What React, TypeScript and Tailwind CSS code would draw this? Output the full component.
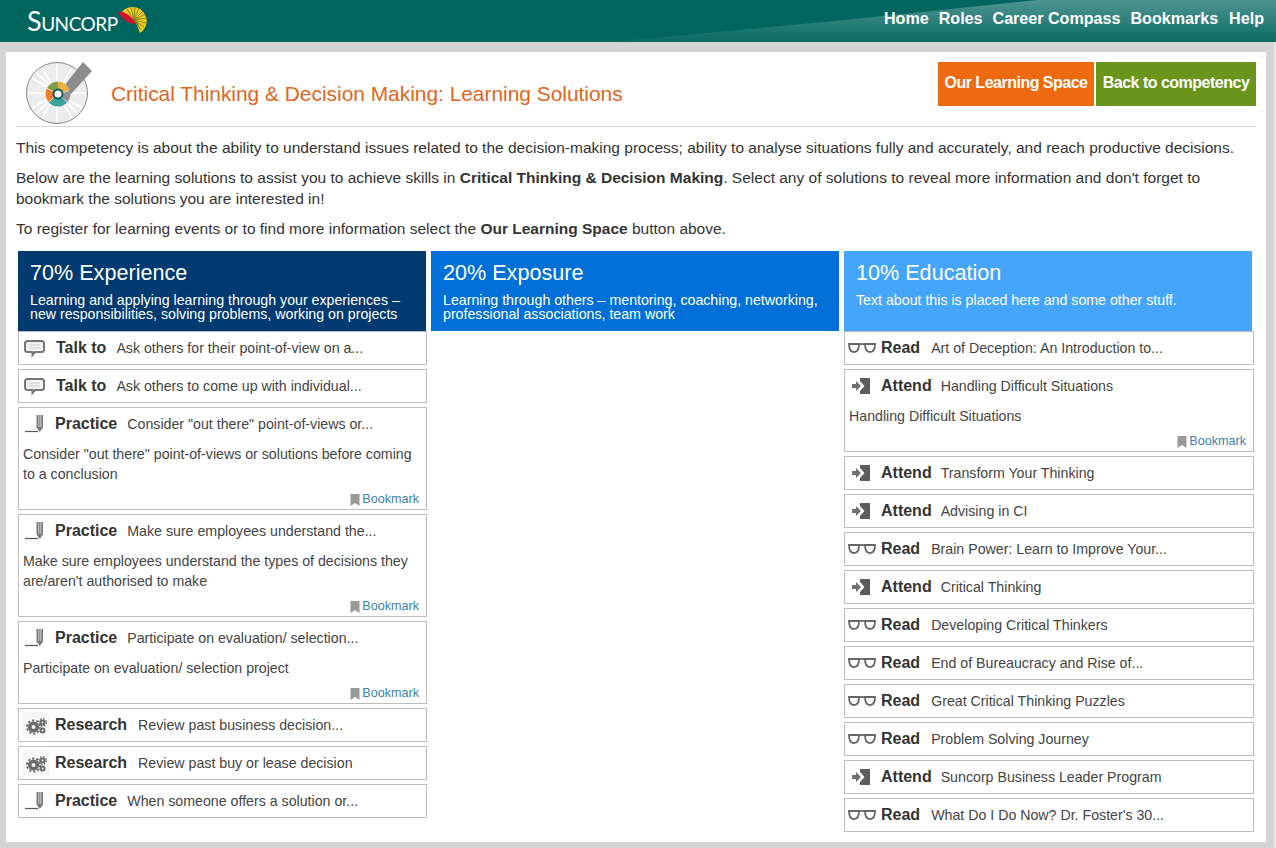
type Kind = "talk" | "practice" | "research" | "read" | "attend"

type Item = {
  kind: Kind
  text: string
  detail?: string[]
}

const labels: Record<Kind, string> = {
  talk: "Talk to",
  practice: "Practice",
  research: "Research",
  read: "Read",
  attend: "Attend",
}

const experience: Item[] = [
  { kind: "talk", text: "Ask others for their point-of-view on a..." },
  { kind: "talk", text: "Ask others to come up with individual..." },
  {
    kind: "practice",
    text: 'Consider "out there" point-of-views or...',
    detail: ['Consider "out there" point-of-views or solutions before coming', "to a conclusion"],
  },
  {
    kind: "practice",
    text: "Make sure employees understand the...",
    detail: ["Make sure employees understand the types of decisions they", "are/aren't authorised to make"],
  },
  {
    kind: "practice",
    text: "Participate on evaluation/ selection...",
    detail: ["Participate on evaluation/ selection project"],
  },
  { kind: "research", text: "Review past business decision..." },
  { kind: "research", text: "Review past buy or lease decision" },
  { kind: "practice", text: "When someone offers a solution or..." },
]

const education: Item[] = [
  { kind: "read", text: "Art of Deception: An Introduction to..." },
  { kind: "attend", text: "Handling Difficult Situations", detail: ["Handling Difficult Situations"] },
  { kind: "attend", text: "Transform Your Thinking" },
  { kind: "attend", text: "Advising in CI" },
  { kind: "read", text: "Brain Power: Learn to Improve Your..." },
  { kind: "attend", text: "Critical Thinking" },
  { kind: "read", text: "Developing Critical Thinkers" },
  { kind: "read", text: "End of Bureaucracy and Rise of..." },
  { kind: "read", text: "Great Critical Thinking Puzzles" },
  { kind: "read", text: "Problem Solving Journey" },
  { kind: "attend", text: "Suncorp Business Leader Program" },
  { kind: "read", text: "What Do I Do Now? Dr. Foster's 30..." },
]

const KindIcon = ({ kind }: { kind: Kind }) => {
  if (kind === "talk") {
    return (
      <svg width="30" height="24" viewBox="0 0 30 24" className="shrink-0">
        <path d="M6.500 5h14a2.500 2.500 0 0 1 2.500 2.500v6a2.500 2.500 0 0 1-2.500 2.500H14l-2.500 3v-3H6.500A2.500 2.500 0 0 1 4 13.500v-6A2.500 2.500 0 0 1 6.500 5z" fill="#f2f2f2" stroke="#777" strokeWidth="2" />
        <path d="M8 9h11M8 12h11" stroke="#cfcfcf" strokeWidth="1.200" />
      </svg>
    )
  }
  if (kind === "practice") {
    return (
      <svg width="30" height="24" viewBox="0 0 30 24" className="shrink-0">
        <path d="M4 19.500h13" stroke="#555" strokeWidth="1.200" />
        <path d="M15.500 3h6.500v12.500l-3.200 4.500-3.300-4.500z" fill="#7a7a7a" />
        <path d="M17.800 3v12M19.800 3v12" stroke="#e4e4e4" strokeWidth="0.800" />
      </svg>
    )
  }
  if (kind === "research") {
    return (
      <svg width="26" height="26" viewBox="0 0 26 26" className="shrink-0 bg-[#f6f6f6]">
        <circle cx="10.500" cy="15" r="3.800" fill="none" stroke="#6a6a6a" strokeWidth="3.600" />
        <circle cx="10.500" cy="15" r="6.600" fill="none" stroke="#6a6a6a" strokeWidth="1.800" strokeDasharray="2.200 2" />
        <circle cx="19.500" cy="10.500" r="2" fill="none" stroke="#6a6a6a" strokeWidth="2.200" />
        <circle cx="19.500" cy="10.500" r="3.800" fill="none" stroke="#6a6a6a" strokeWidth="1.300" strokeDasharray="1.500 1.500" />
        <circle cx="19.500" cy="18.500" r="2" fill="none" stroke="#6a6a6a" strokeWidth="2" />
      </svg>
    )
  }
  if (kind === "read") {
    return (
      <svg width="28" height="14" viewBox="0 0 28 14" className="shrink-0">
        <path d="M1 3h10c0 4-1 8-5 8S1 7 1 3zM17 3h10c0 4-1 8-5 8s-5-4-5-8zM11 3.500c2-.8 4-.8 6 0" fill="none" stroke="#666" strokeWidth="1.800" />
      </svg>
    )
  }
  return (
    <svg width="20" height="18" viewBox="0 0 20 18" className="shrink-0">
      <path d="M1 7h4V4l5 5-5 5v-3H1z" fill="#707070" />
      <path d="M9 1h10v16H9v-3l4.500-5L9 4z" fill="#5c5c5c" />
    </svg>
  )
}

const iconBox: Record<Kind, string> = {
  talk: "w-[33px] pl-0.5",
  practice: "w-[32px] pl-0.5",
  research: "w-[32px] pl-1",
  read: "w-[32px] pl-[3px]",
  attend: "w-[32px] pl-[6px]",
}

const descGap: Record<Kind, string> = {
  talk: "ml-[10px]",
  practice: "ml-[10px]",
  research: "ml-[11px]",
  read: "ml-[11px]",
  attend: "ml-[9px]",
}

const Bookmark = () => (
  <div className="flex h-[17px] items-center justify-end pr-[7px] text-[12.600px] text-[#3b82a8]">
    <svg width="10" height="12" viewBox="0 0 10 12" className="mr-[2px]">
      <path d="M0.500 0h9v12l-4.500-3-4.500 3z" fill="#999" />
    </svg>
    Bookmark
  </div>
)

const Card = ({ item }: { item: Item }) => (
  <div className="border border-[#bdbdbd] bg-white text-[#333]">
    <div className="flex h-[32px] items-center">
      <div className={`flex shrink-0 items-center ${iconBox[item.kind]}`}>
        <KindIcon kind={item.kind} />
      </div>
      <span className="mb-[1px] ml-[4px] text-[16px] font-bold leading-none">{labels[item.kind]}</span>
      <span className={`text-[14.200px] leading-none text-[#444] ${descGap[item.kind]}`}>{item.text}</span>
    </div>
    {item.detail && (
      <>
        <div className="mt-[4px] px-1 text-[14.200px] leading-[20px] text-[#444]">
          {item.detail.map((line) => (
            <div key={line}>{line}</div>
          ))}
        </div>
        <div className="mt-[7px] pb-[1px]">
          <Bookmark />
        </div>
      </>
    )}
  </div>
)

const Column = ({
  title,
  lines,
  color,
  items,
}: {
  title: string
  lines: string[]
  color: string
  items: Item[]
}) => (
  <div className="flex flex-col">
    <div className={`h-[80px] w-[408px] px-3 pt-[9px] text-white ${color}`}>
      <div className="text-[21.600px] leading-[26px]">{title}</div>
      <div className="mt-[7px] text-[14.200px] leading-[14px]">
        {lines.map((line) => (
          <div key={line}>{line}</div>
        ))}
      </div>
    </div>
    <div className="flex flex-col gap-[4px]">
      {items.map((item) => (
        <Card key={item.kind + item.text} item={item} />
      ))}
    </div>
  </div>
)

const SunLogo = () => (
  <svg width="36" height="32" viewBox="0 0 36 32" className="absolute left-[116px] top-[3px]">
    <path d="M6 9 A14 14 0 1 1 24 30 L20 20 L12 13 Z" fill="#f2c81e" />
    <g stroke="#6d7a1f" strokeWidth="0.800">
      <path d="M18 17 L11 6M18 17 L15 4.500M18 17 L19 4M18 17 L23 5M18 17 L27 8M18 17 L29.500 11M18 17 L30.500 15M18 17 L30 20M18 17 L28 24M18 17 L25 27" />
    </g>
    <path d="M18 17 L23 24.500 A9 9 0 0 0 18 17z" fill="#6d7a1f" />
    <path d="M2 9 C8 8 15 12 20 21 C12 21 6 16 2 9z" fill="#d3122f" />
  </svg>
)

const CompetencyBadge = () => (
  <svg width="68" height="66" viewBox="0 0 68 66" className="shrink-0">
    <circle cx="32" cy="32" r="30.500" fill="#ececec" stroke="#8a8a8a" strokeWidth="1" />
    <g stroke="#fff" strokeWidth="1.500">
      <path d="M32 3v58M3 32h58M11.500 11.500l41 41M52.500 11.500l-41 41M17 7l30 50M47 7L17 57M7 17l50 30M57 17L7 47" />
    </g>
    <path d="M39 25 L58 1 L67 10 L46 33 Z" fill="#8c8c8c" />
    <g fill="none" strokeWidth="8" transform="rotate(-90 33 33)">
      <circle cx="33" cy="33" r="8.500" pathLength="100" stroke="#e9b04a" strokeDasharray="20 80" />
      <circle cx="33" cy="33" r="8.500" pathLength="100" stroke="#8f8f8f" strokeDasharray="15 85" strokeDashoffset="-21" />
      <circle cx="33" cy="33" r="8.500" pathLength="100" stroke="#3aa39e" strokeDasharray="26 74" strokeDashoffset="-37" />
      <circle cx="33" cy="33" r="8.500" pathLength="100" stroke="#ee7f2d" strokeDasharray="18 82" strokeDashoffset="-64" />
      <circle cx="33" cy="33" r="8.500" pathLength="100" stroke="#7fa04a" strokeDasharray="17 83" strokeDashoffset="-83" />
    </g>
    <circle cx="33" cy="33" r="4.500" fill="#fff" stroke="#0b5f5a" strokeWidth="2" />
  </svg>
)

const App = () => {
  return (
    <div className="h-[848px] w-[1276px] overflow-hidden bg-[#d4d4d4] font-['Liberation_Sans',Arial,sans-serif]">
      <header className="relative flex h-[42px] items-center justify-end overflow-hidden bg-[#00655f] pb-[6px] pr-3">
        <svg width="1276" height="42" viewBox="0 0 1276 42" className="absolute left-0 top-0">
          <defs>
            <linearGradient id="swoosh" x1="0" y1="0" x2="0" y2="1">
              <stop offset="0" stopColor="#4f948f" />
              <stop offset="0.55" stopColor="#2a7d78" />
              <stop offset="1" stopColor="#0a6a64" />
            </linearGradient>
          </defs>
          <path d="M610 42 L835 21 L1037 0 H1276 V42 Z" fill="url(#swoosh)" />
        </svg>
        <SunLogo />
        <div className="absolute left-[27px] top-[7px] font-['Lato',sans-serif] text-[27px] leading-[28px] tracking-[-0.5px] text-white [font-variant:small-caps]">
          Suncorp
        </div>
        <nav className="relative flex gap-[10px] text-[16.100px] font-bold text-white">
          <span>Home</span>
          <span>Roles</span>
          <span>Career Compass</span>
          <span>Bookmarks</span>
          <span className="ml-[1px]">Help</span>
        </nav>
      </header>
      <div className="h-[806px] border-r-2 border-[#e8e8e8] pl-[6px] pt-[10px]">
        <main className="h-[790px] w-[1260px] bg-white px-[10px]">
          <div className="flex h-[75px] items-start justify-between border-b border-[#d4d4d4]">
            <div className="flex items-center pl-[9px] pt-[9px]">
              <CompetencyBadge />
              <h1 className="ml-[18px] text-[20.900px] font-normal leading-none text-[#e0661c]">
                Critical Thinking &amp; Decision Making: Learning Solutions
              </h1>
            </div>
            <div className="flex gap-[2px] pt-[10px] text-[16px] font-bold tracking-[-0.5px] text-white">
              <div className="flex h-[44px] w-[156px] items-center justify-center bg-[#ee6a10] pb-[2px]">Our Learning Space</div>
              <div className="flex h-[44px] w-[160px] items-center justify-center bg-[#69951c] pb-[2px]">Back to competency</div>
            </div>
          </div>
          <div className="text-[15.500px] leading-[21px] text-[#333]">
            <p className="mt-[10px]">
              This competency is about the ability to understand issues related to the decision-making process; ability to analyse situations fully and accurately, and reach productive decisions.
            </p>
            <p className="mt-[9px]">
              Below are the learning solutions to assist you to achieve skills in <b>Critical Thinking &amp; Decision Making</b>. Select any of solutions to reveal more information and don't forget to
              <br />
              bookmark the solutions you are interested in!
            </p>
            <p className="mt-[9px]">
              To register for learning events or to find more information select the <b>Our Learning Space</b> button above.
            </p>
          </div>
          <div className="ml-[2px] mt-[12px] grid grid-cols-[413px_413px_410px]">
            <div className="w-[409px]">
              <Column
                title="70% Experience"
                lines={["Learning and applying learning through your experiences –", "new responsibilities, solving problems, working on projects"]}
                color="bg-[#003a70]"
                items={experience}
              />
            </div>
            <Column
              title="20% Exposure"
              lines={["Learning through others – mentoring, coaching, networking,", "professional associations, team work"]}
              color="bg-[#0070d8]"
              items={[]}
            />
            <Column
              title="10% Education"
              lines={["Text about this is placed here and some other stuff."]}
              color="bg-[#45a5fb]"
              items={education}
            />
          </div>
        </main>
      </div>
    </div>
  )
}

export default App
